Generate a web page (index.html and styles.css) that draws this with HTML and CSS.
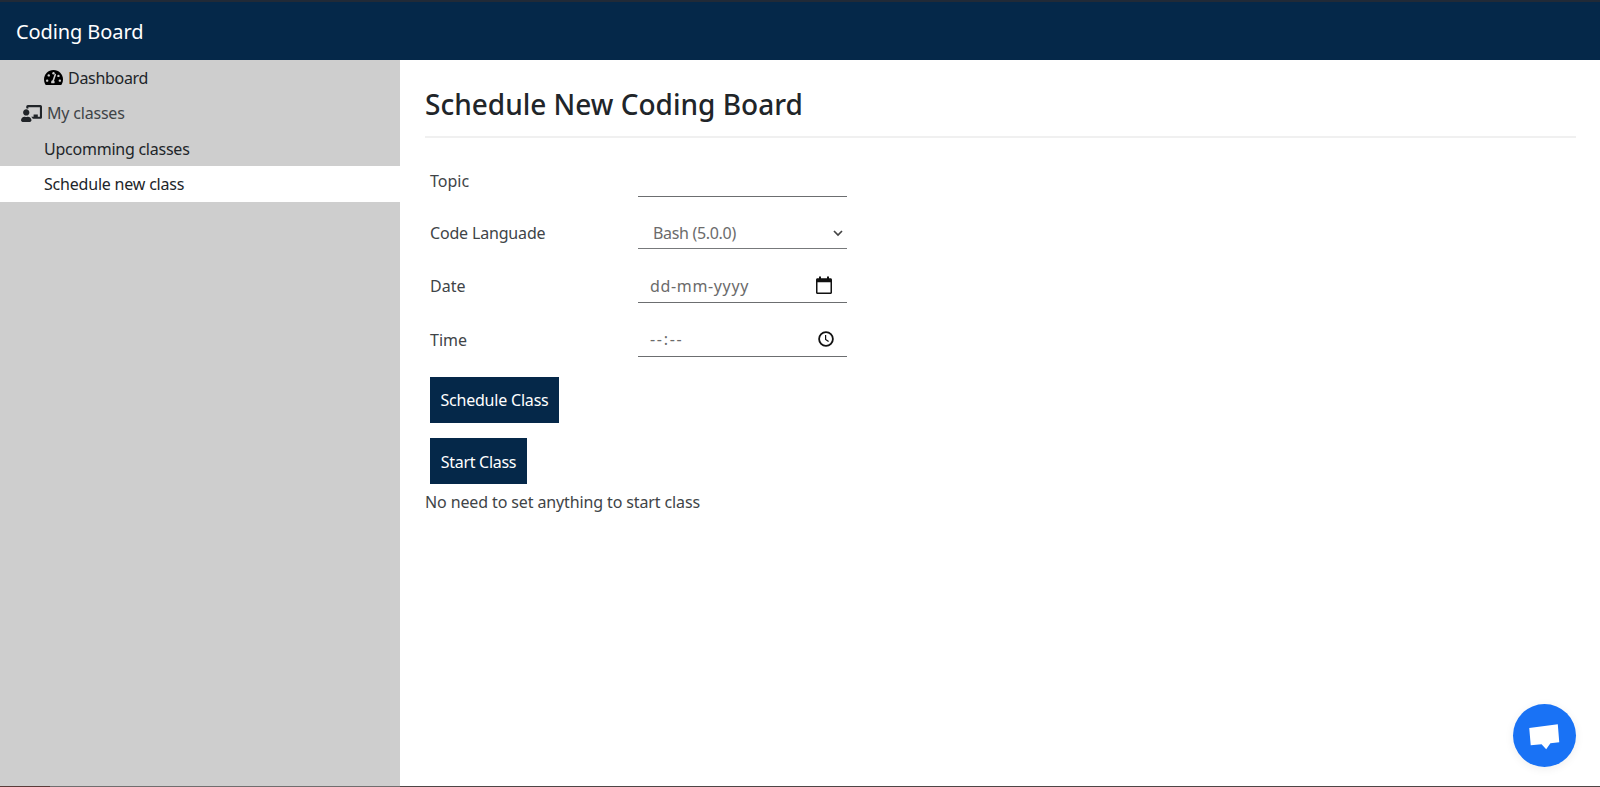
FILE: index.html
```html
<!DOCTYPE html>
<html lang="en">
<head>
<meta charset="utf-8">
<title>Coding Board</title>
<link rel="stylesheet" href="styles.css">
</head>
<body>
<div class="app">
  <header class="navbar"><span class="brand">Coding Board</span></header>
  <div class="body">
    <nav class="sidebar">
      <a class="item dashboard">
        <svg class="gauge" viewBox="0 0 576 448"><path d="M288 0C129 0 0 129 0 288c0 53 14 102 39 145 6 10 16 15 27 15h444c11 0 21-5 27-15 25-43 39-92 39-145C576 129 447 0 288 0z"/><g fill="#cecece"><circle cx="96" cy="320" r="36"/><circle cx="144" cy="160" r="36"/><circle cx="288" cy="96" r="36"/><circle cx="438" cy="176" r="36"/><circle cx="480" cy="320" r="36"/><path d="M350 112c12 4 20 17 16 30l-62 184c21 20 27 50 10 74h-92c-18-45 4-86 37-90l61-183c4-12 18-19 30-15z"/></g></svg>
        <span class="t-dash">Dashboard</span>
      </a>
      <div class="item group">
        <svg class="teacher" viewBox="0 0 640 512"><path d="M208 352c-2 0-5 0-7 1-13 4-27 7-41 7s-28-3-41-7c-2-1-5-1-7-1C50 352 0 402 0 464c0 26 22 48 48 48h224c26 0 48-22 48-48 0-62-50-112-112-112zM160 320c53 0 96-43 96-96s-43-96-96-96-96 43-96 96 43 96 96 96zM592 0H208c-26 0-48 22-48 49v47c23 0 45 7 64 18V64h352v288h-64v-64H384v64h-76c24 19 42 44 52 64h232c26 0 48-22 48-49V49c0-27-22-49-48-49z"/></svg>
        <span class="t-my">My classes</span>
      </div>
      <a class="item sub"><span class="t-up">Upcomming classes</span></a>
      <a class="item sub active"><span class="t-new">Schedule new class</span></a>
    </nav>
    <main class="content">
      <h1 class="title">Schedule New Coding Board</h1>
      <form class="form">
        <label class="label t-topic">Topic</label><div class="field topic"></div>
        <label class="label t-lang">Code Languade</label>
        <div class="field select"><span class="t-bash">Bash (5.0.0)</span><svg class="chevron" viewBox="0 0 10 7"><path d="M1 1l4 4 4-4"/></svg></div>
        <label class="label t-date">Date</label>
        <div class="field date"><span class="t-dmy">dd-mm-yyyy</span><svg class="calendar" viewBox="0 0 18 19"><path d="M15.5 2.3H14V.5h-2v1.8H6V.5H4v1.8H2.500C1.600 2.300 1 3 1 3.800v12.700C1 17.400 1.600 18 2.500 18h13c.9 0 1.500-.6 1.500-1.500V3.800c0-.8-.6-1.500-1.500-1.500zm0 14.200h-13V6.300h13z"/></svg></div>
        <label class="label t-time">Time</label>
        <div class="field time"><span class="t-hm">--:--</span><svg class="clock" viewBox="0 0 16 16"><circle cx="8" cy="8" r="6.900"/><path d="M7.600 4v4.400l3 2.200"/></svg></div>
      </form>
      <button class="button b-schedule"><span class="t-sc">Schedule Class</span></button>
      <button class="button b-start"><span class="t-st">Start Class</span></button>
      <p class="note"><span class="t-note">No need to set anything to start class</span></p>
    </main>
  </div>
  <div class="bottom-edge"></div>
  <div class="chat"><svg viewBox="0 0 64 64"><path d="M16.500 24.500L45.500 20.500 47 38.800 38 39.800 33.700 46 29 41 18 42z"/></svg></div>
</div>
</body>
</html>
```
FILE: styles.css
```css
* { box-sizing: border-box; }
body { margin: 0; background: #fff; color: #212529; font: 16px/24px "Noto Sans", "Open Sans", sans-serif; overflow: hidden; }
.app { height: 787px; display: flex; flex-direction: column; }
.navbar { height: 60px; flex: none; background: #052849; border-top: 2px solid #212a37; color: #fff; display: flex; align-items: center; padding: 2px 0 0 16px; }
.brand { font-size: 20px; line-height: 30px; letter-spacing: -.1px; }
.body { flex: 1; display: flex; min-height: 0; }
.sidebar { width: 400px; flex: none; background: #cecece; }
.item { height: 35.4px; display: flex; align-items: center; padding-left: 44px; white-space: nowrap; }
.group { padding-left: 21px; color: #404447; }
.sub { padding-top: 1px; }
.active { background: #fff; }
.gauge { width: 19px; height: 15px; margin-right: 5px; fill: #000; }
.teacher { width: 21px; height: 17px; margin-right: 5px; fill: #212529; }
.t-dash { letter-spacing: -.3px; }
.t-my { letter-spacing: -.2px; }
.t-up { letter-spacing: -.24px; }
.t-new { letter-spacing: -.2px; }
.t-lang { letter-spacing: -.17px; }
.t-bash { letter-spacing: -.32px; }
.t-dmy { letter-spacing: .65px; }
.t-hm { letter-spacing: 1.7px; }
.t-sc { letter-spacing: -.2px; }
.t-st { letter-spacing: -.3px; }
.t-note { letter-spacing: -.12px; }
.content { flex: 1; padding: 22px 24px 0 25px; color: #404447; }
.title { margin: 0; height: 56px; padding-top: 3px; border-bottom: 2px solid #f0f0f0; color: #212529; font-size: 28px; font-weight: 500; line-height: 38px; white-space: nowrap; }
.form { width: 422px; margin-top: 22px; padding-left: 5px; display: grid; grid-template-columns: 208px 209px; grid-template-rows: 37px 51.500px 54.500px 54px; }
.label { align-self: end; line-height: 24px; margin-bottom: 4px; white-space: nowrap; }
.t-date, .t-time { margin-bottom: 5px; }
.field { align-self: end; height: 30px; border-bottom: 1px solid #6c6e70; display: flex; align-items: center; justify-content: space-between; color: #6b6b6b; white-space: nowrap; }
.select { padding: 0 4px 0 15px; border-color: #77797b; }
.date { padding: 0 14px 4px 12px; }
.time { padding: 0 13px 5px 12px; }
.chevron { width: 10px; height: 7px; fill: none; stroke: #444; stroke-width: 1.700; }
.calendar { width: 18px; height: 19px; fill: #111; }
.clock { width: 16px; height: 16px; fill: none; stroke: #111; stroke-width: 1.800; }
.clock path { stroke-width: 1.200; }
.button { display: flex; align-items: center; justify-content: center; height: 46px; margin: 0 0 0 5px; padding: 0; border: 0; background: #052849; color: #fff; font: inherit; white-space: nowrap; }
.b-schedule { width: 129px; margin-top: 20px; }
.b-start { width: 97px; margin-top: 15px; padding-top: 1px; }
.note { margin: 6px 0 0; }
.bottom-edge { height: 1px; flex: none; background: linear-gradient(90deg, #593c39 50px, #706e6e 50px, #706e6e 400px, #4e4646 400px); }
.chat { position: absolute; left: 1513px; top: 704px; width: 63px; height: 63px; border-radius: 50%; background: #1972f5; box-shadow: 0 2px 10px rgba(0,0,0,.07); }
.chat svg { display: block; width: 63px; height: 63px; fill: #fff; }
```
